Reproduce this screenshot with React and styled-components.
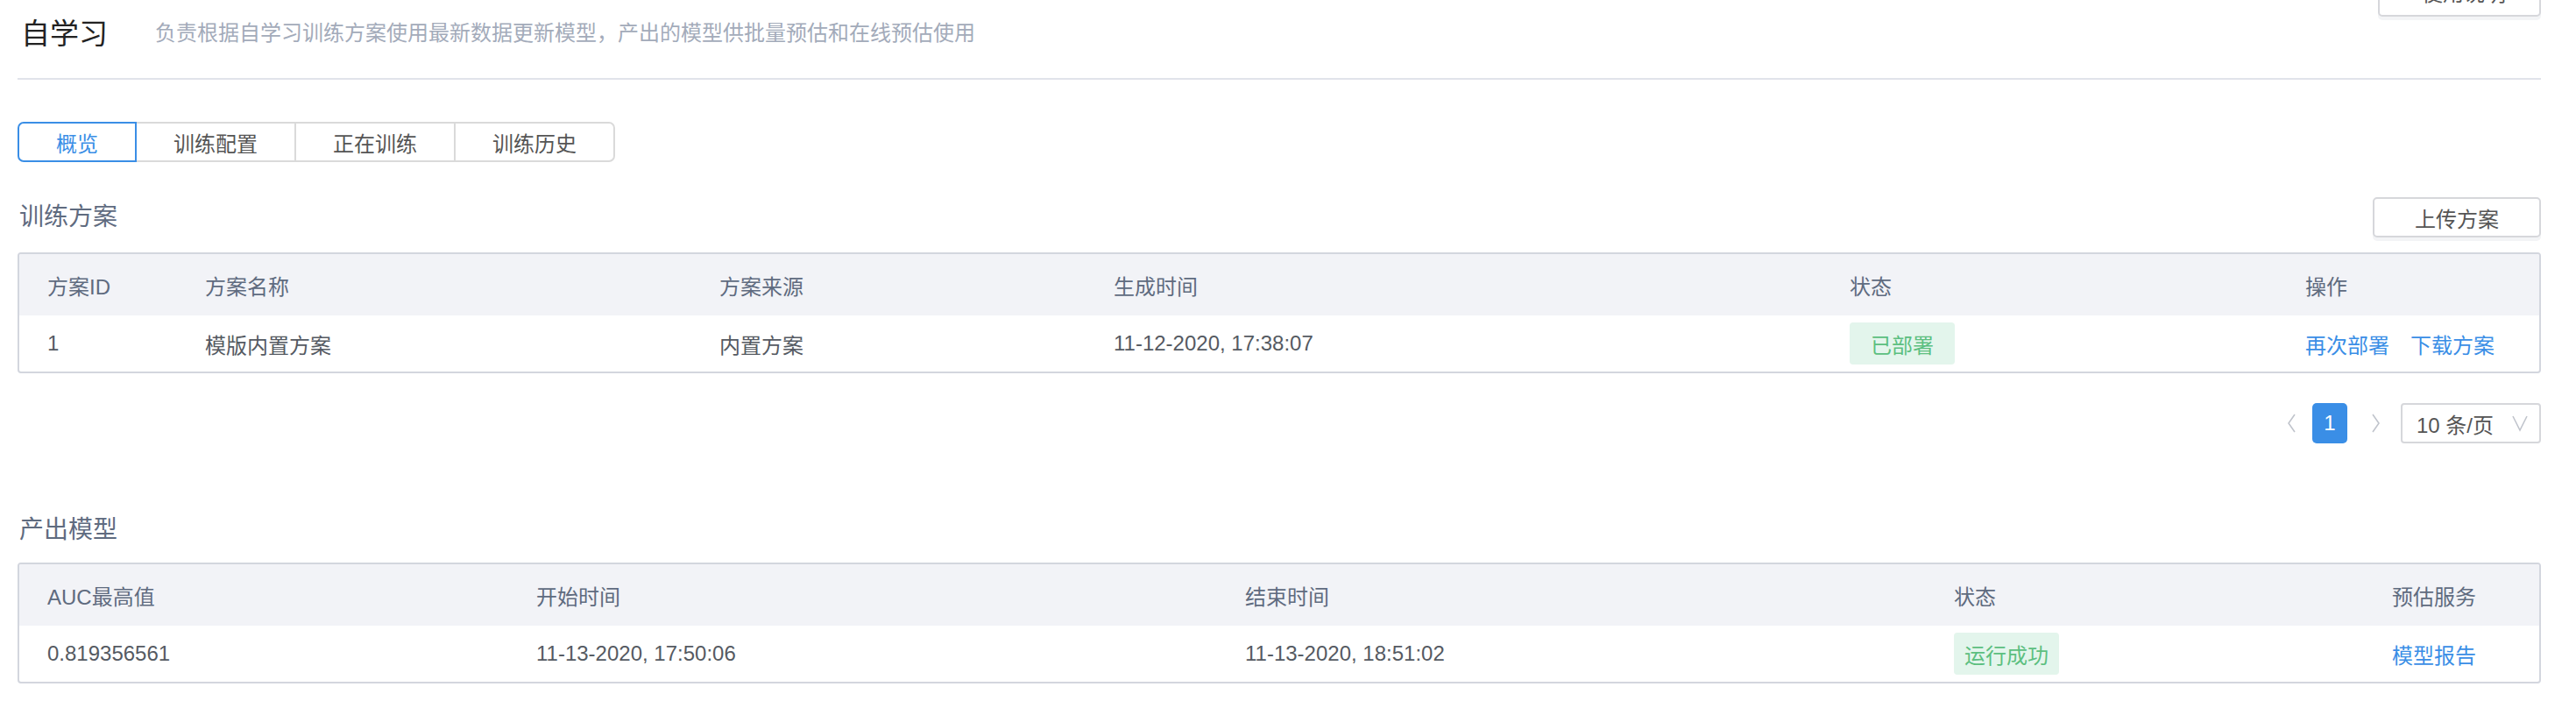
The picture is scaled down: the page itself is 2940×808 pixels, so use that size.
import React from "react";
import styled, { createGlobalStyle } from "styled-components";

const Global = createGlobalStyle`
  html, body { margin: 0; padding: 0; background: #fff; }
  body {
    font-family: "Liberation Sans", "Noto Sans CJK SC", sans-serif;
    -webkit-font-smoothing: antialiased;
  }
  * { box-sizing: border-box; }
`;

const Page = styled.div`
  padding: 0 40px 0 20px;
  overflow: hidden;
  height: 808px;
`;

const Header = styled.header`
  display: flex;
  align-items: flex-start;
  height: 91px;
  border-bottom: 2px solid #e1e3ea;
`;

const Title = styled.h1`
  margin: 15px 0 0 4px;
  font-size: 33px;
  line-height: 48px;
  font-weight: 400;
  color: #222;
`;

const Subtitle = styled.p`
  margin: 14px 0 0 54px;
  font-size: 24px;
  line-height: 48px;
  color: #a3abba;
`;

const Button = styled.button`
  font-family: inherit;
  height: 46px;
  padding: 0 ${(p) => p.$px || 48}px;
  margin: ${(p) => p.$m || "0"};
  font-size: 24px;
  color: #555;
  background: #fff;
  border: 2px solid #d6d7db;
  border-radius: 5px;
  box-shadow: 0 4px 0 #f3f4f6;
  white-space: nowrap;
`;

const HeaderButton = styled(Button)`
  margin-left: auto;
  margin-top: -39px;
  height: 58px;
  width: 186px;
`;

const Tabs = styled.div`
  display: flex;
  margin-top: 48px;
`;

const Tab = styled.div`
  position: relative;
  height: 46px;
  padding: 0 42px;
  display: flex;
  align-items: center;
  font-size: 24px;
  color: ${(p) => (p.$active ? "#3a8ee6" : "#555")};
  border: 2px solid ${(p) => (p.$active ? "#3a8ee6" : "#dadada")};
  z-index: ${(p) => (p.$active ? 1 : 0)};
  margin-left: -2px;
  &:first-child { margin-left: 0; border-radius: 7px 0 0 7px; }
  &:last-child { border-radius: 0 7px 7px 0; }
`;

const SectionHead = styled.div`
  display: flex;
  align-items: center;
  justify-content: space-between;
  height: 46px;
  margin-top: ${(p) => p.$mt}px;
`;

const SectionTitle = styled.h2`
  margin: 0 0 0 2px;
  font-size: 28px;
  line-height: 40px;
  font-weight: 400;
  color: #5f6b7f;
`;

const Table = styled.div`
  margin-top: ${(p) => p.$mt || 17}px;
  border: 2px solid #d3d6de;
  border-radius: 4px;
  overflow: hidden;
  display: grid;
  grid-template-columns: ${(p) => p.$cols};
`;

const HeadCell = styled.div`
  height: 70px;
  display: flex;
  align-items: center;
  padding-left: 32px;
  background: #f2f3f7;
  font-size: 24px;
  color: #5f6b7f;
  white-space: nowrap;
`;

const Cell = styled.div`
  height: 64px;
  display: flex;
  align-items: center;
  gap: 24px;
  padding-left: 32px;
  font-size: 24px;
  color: #555a62;
  white-space: nowrap;
`;

const Tag = styled.span`
  display: inline-flex;
  align-items: center;
  justify-content: center;
  min-width: 120px;
  height: 48px;
  padding: 0 12px;
  border-radius: 4px;
  background: #e3f5ec;
  color: #5cbf80;
  font-size: 24px;
`;

const Link = styled.a`
  color: #3a8ee6;
  font-size: 24px;
  cursor: pointer;
`;

const Pager = styled.div`
  display: flex;
  justify-content: flex-end;
  align-items: center;
  height: 46px;
  margin-top: 34px;
`;

const Arrow = styled.span`
  display: flex;
  align-items: center;
  justify-content: center;
  width: 24px;
  height: 46px;
  margin: ${(p) => p.$m};
`;

const PageNum = styled.span`
  display: flex;
  align-items: center;
  justify-content: center;
  width: 40px;
  height: 46px;
  border-radius: 5px;
  background: #3a8ee6;
  color: #fff;
  font-size: 24px;
`;

const Select = styled.div`
  display: flex;
  align-items: center;
  justify-content: space-between;
  width: 160px;
  height: 46px;
  padding: 0 12px 0 16px;
  border: 2px solid #d6d7db;
  border-radius: 4px;
  font-size: 24px;
  color: #555;
`;

const Chevron = ({ dir }) => {
  const pts =
    dir === "left" ? "9,2 2,12 9,22" : dir === "right" ? "2,2 9,12 2,22" : "2,2 10,18 18,2";
  const w = dir === "down" ? 20 : 11;
  const h = dir === "down" ? 20 : 24;
  return (
    <svg width={w} height={h} viewBox={`0 0 ${w} ${h}`}>
      <polyline points={pts} fill="none" stroke="#c0c4cc" strokeWidth="1.6" />
    </svg>
  );
};

export default function App() {
  return (
    <Page>
      <Global />
      <Header>
        <Title>自学习</Title>
        <Subtitle>负责根据自学习训练方案使用最新数据更新模型，产出的模型供批量预估和在线预估使用</Subtitle>
        <HeaderButton>使用说明</HeaderButton>
      </Header>

      <Tabs>
        <Tab $active>概览</Tab>
        <Tab>训练配置</Tab>
        <Tab>正在训练</Tab>
        <Tab>训练历史</Tab>
      </Tabs>

      <SectionHead $mt={40}>
        <SectionTitle>训练方案</SectionTitle>
        <Button $px={46}>上传方案</Button>
      </SectionHead>
      <Table $cols="180px 587px 450px 840px 520px 1fr">
        <HeadCell>方案ID</HeadCell>
        <HeadCell>方案名称</HeadCell>
        <HeadCell>方案来源</HeadCell>
        <HeadCell>生成时间</HeadCell>
        <HeadCell>状态</HeadCell>
        <HeadCell>操作</HeadCell>
        <Cell>1</Cell>
        <Cell>模版内置方案</Cell>
        <Cell>内置方案</Cell>
        <Cell>11-12-2020, 17:38:07</Cell>
        <Cell><Tag>已部署</Tag></Cell>
        <Cell>
          <Link>再次部署</Link>
          <Link>下载方案</Link>
        </Cell>
      </Table>

      <Pager>
        <Arrow $m="0 12px 0 0"><Chevron dir="left" /></Arrow>
        <PageNum>1</PageNum>
        <Arrow $m="0 17px 0 20px"><Chevron dir="right" /></Arrow>
        <Select>
          <span>10 条/页</span>
          <Chevron dir="down" />
        </Select>
      </Pager>

      <SectionHead $mt={76}>
        <SectionTitle>产出模型</SectionTitle>
      </SectionHead>
      <Table $mt={14} $cols="558px 809px 809px 500px 1fr">
        <HeadCell>AUC最高值</HeadCell>
        <HeadCell>开始时间</HeadCell>
        <HeadCell>结束时间</HeadCell>
        <HeadCell>状态</HeadCell>
        <HeadCell>预估服务</HeadCell>
        <Cell>0.819356561</Cell>
        <Cell>11-13-2020, 17:50:06</Cell>
        <Cell>11-13-2020, 18:51:02</Cell>
        <Cell><Tag>运行成功</Tag></Cell>
        <Cell><Link>模型报告</Link></Cell>
      </Table>
    </Page>
  );
}
